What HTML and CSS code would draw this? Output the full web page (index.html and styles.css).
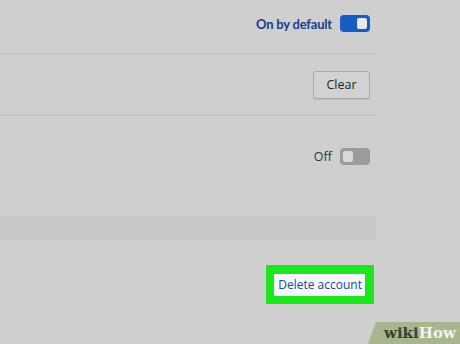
FILE: index.html
```html
<!DOCTYPE html>
<html>
<head>
<meta charset="utf-8">
<link rel="stylesheet" href="styles.css">
</head>
<body>
<div class="page">
  <div class="panel">
    <div class="row row-first">
      <span class="label-blue">On by default</span>
      <span class="toggle toggle-on"><span class="knob"></span></span>
    </div>
    <div class="row row-second">
      <button class="btn">Clear</button>
    </div>
    <div class="row row-third">
      <span class="label-off">Off</span>
      <span class="toggle toggle-off"><span class="knob"></span></span>
    </div>
    <div class="band"></div>
    <div class="row row-delete">
      <span class="highlight"><span class="delete">Delete account</span></span>
    </div>
  </div>
  <div class="wm"><span class="wm-wiki">wiki</span><span class="wm-how">How</span></div>
</div>
</body>
</html>
```
FILE: styles.css
```css
html, body {
  margin: 0;
  padding: 0;
  background: #cfcfcf;
}
.page {
  position: relative;
  width: 460px;
  height: 344px;
  overflow: hidden;
  font-family: "Open Sans", "Liberation Sans", sans-serif;
}
.panel {
  width: 376px;
  display: flex;
  flex-direction: column;
}
.row {
  display: flex;
  justify-content: flex-end;
  align-items: center;
  padding-right: 6px;
  box-sizing: border-box;
}
.row-first {
  height: 55px;
  padding-bottom: 6px;
  border-bottom: 2px solid #c6c6c6;
}
.row-second {
  height: 61px;
  padding-top: 0;
  border-bottom: 2px solid #c6c6c6;
}
.row-third {
  height: 80px;
  padding-top: 0;
}
.band {
  height: 24px;
  margin-top: 20px;
  background: #c8c9cb;
}
.row-delete {
  height: 104px;
  padding-right: 2px;
  padding-bottom: 16px;
}
.label-blue {
  color: #1a3d8a;
  font-family: Lato, "Open Sans", sans-serif;
  font-size: 13px;
  font-weight: 700;
  letter-spacing: -0.2px;
  margin-right: 8px;
}
.label-off {
  color: #333;
  font-size: 12.5px;
  margin-right: 8px;
}
.toggle {
  width: 30px;
  height: 17px;
  border-radius: 4px;
  display: flex;
  align-items: center;
  box-sizing: border-box;
  padding: 0 3px;
}
.toggle-on {
  background: #1a5bbf;
  justify-content: flex-end;
  box-shadow: 0 0 0 1px #c3d0e6;
}
.toggle-off {
  background: #9b9b9b;
  justify-content: flex-start;
}
.knob {
  width: 10px;
  height: 11px;
  border-radius: 2px;
}
.toggle-on .knob {
  background: #e9e9ec;
}
.toggle-off .knob {
  background: #d9d9d9;
}
.btn {
  width: 57px;
  height: 28px;
  border: 1px solid #a9a9a9;
  border-radius: 3px;
  background: #d2d2d2;
  color: #222;
  font-family: "Open Sans", "Liberation Sans", sans-serif;
  font-size: 12.5px;
  padding: 0;
  box-shadow: 0 1px 0 #bdbdbd;
}
.highlight {
  background: #1ee61e;
  padding: 9px 9px 8px 8px;
  display: flex;
}
.delete {
  background: #f4f7fb;
  color: #1d4a94;
  font-size: 12px;
  padding: 3px 3px 4px 4px;
  line-height: 15px;
}
.wm {
  position: absolute;
  right: 0;
  bottom: 0;
  width: 92px;
  height: 22px;
  background: #a7b68e;
  clip-path: polygon(8px 0, 100% 0, 100% 100%, 0 100%);
  display: flex;
  align-items: center;
  padding-left: 16px;
  box-sizing: border-box;
  font-family: "DejaVu Serif", "Liberation Serif", serif;
  font-weight: bold;
  font-size: 15px;
}
.wm-wiki {
  color: #3b4030;
}
.wm-how {
  color: #f2f4ee;
}
```
